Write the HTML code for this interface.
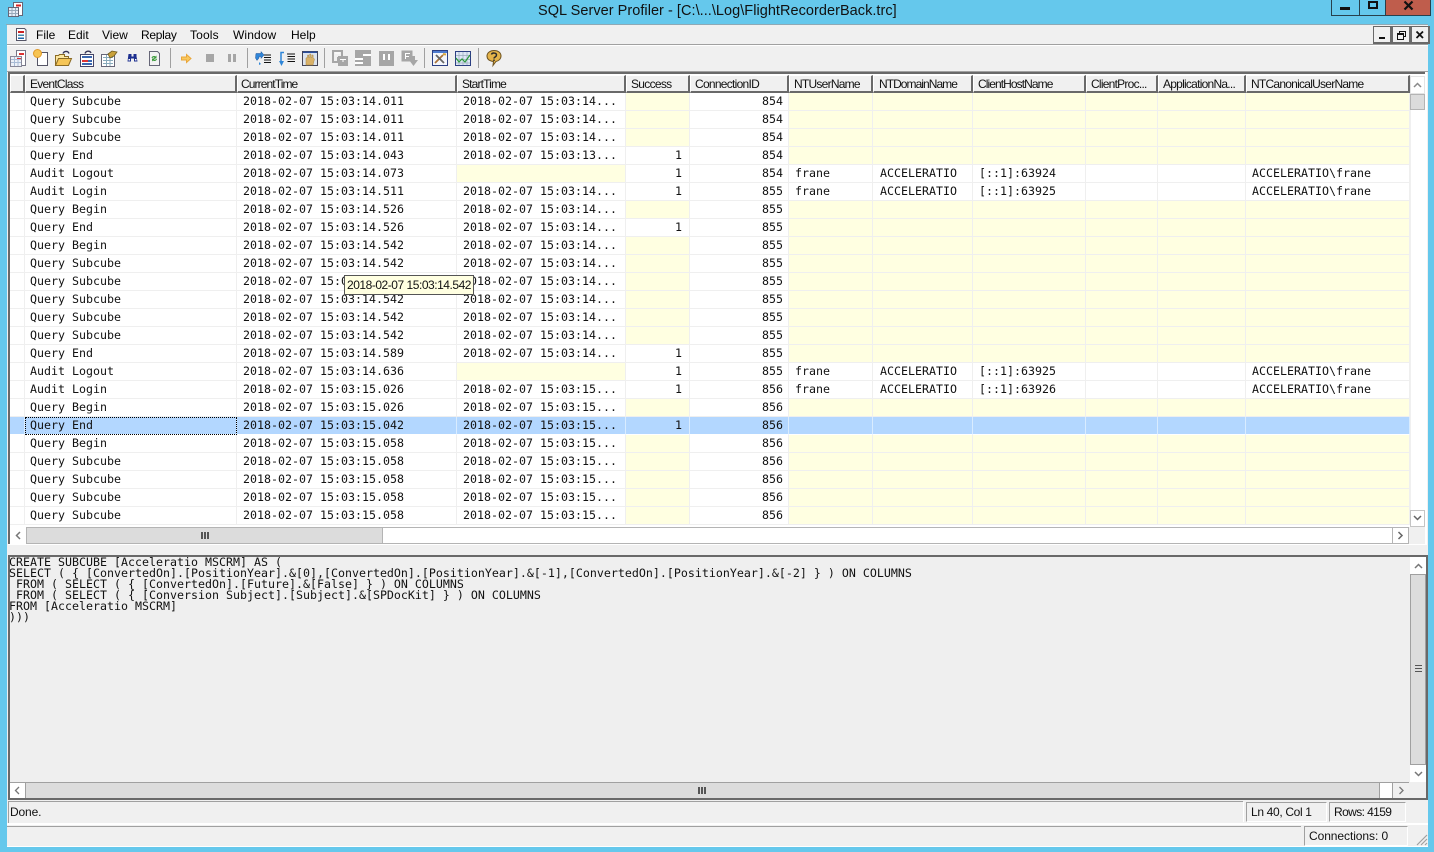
<!DOCTYPE html>
<html><head><meta charset="utf-8"><style>
html,body{margin:0;padding:0;width:1434px;height:852px;overflow:hidden;background:#65c8ec}
*{box-sizing:border-box}
.a{position:absolute}
body{font-family:"Liberation Sans",sans-serif;color:#000}
.m{top:27px;font-size:12px;line-height:16px}
.h{top:75px;height:18px;background:#f0f0f0;border:1px solid #fff;border-right:2px solid #696969;border-bottom:2px solid #696969;font-size:12px;line-height:16px;padding-left:4px;letter-spacing:-.75px;white-space:nowrap;overflow:hidden;color:#111}
table{position:absolute;left:10px;top:93px;width:1400px;table-layout:fixed;border-collapse:separate;border-spacing:0;font:11.63px/17px "DejaVu Sans Mono","Liberation Mono",monospace;color:#111}
td{height:18px;padding:0 0 0 6px;white-space:pre;overflow:hidden;border-right:1px solid #efefef;border-bottom:1px solid #efefef;background:#fff}
td:nth-child(2){padding-left:5px}
td:nth-child(8){padding-left:7px}
td.r{text-align:right;padding:0 5px 0 0}
td:nth-child(5).r{padding-right:7px}
td.y{background:#ffffe1}
tr.s td{background:#b3d7ff;border-right-color:#d9ecff;border-bottom-color:#fff}
#f{left:25px;top:417px;width:212px;height:18px;border:1px dotted #000}
pre{margin:0;position:absolute;left:9px;top:557px;font:11.63px/11px "DejaVu Sans Mono","Liberation Mono",monospace;color:#111}
.g{background:#dcdcdc}
.b{background:#fff;border:1px solid #b4b4b4}
svg{position:absolute;overflow:visible}
.i{top:50px;width:17px;height:17px}
.sp{top:48px;width:1px;height:20px;background:#a0a0a0}
.st{font-size:12px;line-height:14px;color:#111}
</style></head><body>
<div class="a" style="left:7px;top:24px;width:1421px;height:823px;background:#f0f0f0"></div>
<div class="a" style="left:6px;top:24px;width:1422px;height:1px;background:#8fa9b5"></div>
<div class="a" style="left:538px;top:1px;font-size:14.5px;line-height:18px;letter-spacing:.04px;color:#111;white-space:nowrap;margin-top:1px">SQL Server Profiler - [C:\...\Log\FlightRecorderBack.trc]</div>
<svg style="left:8px;top:2px" width="16" height="15" viewBox="0 0 16 15"><path d="M5.500 .5h9v13h-9z" fill="#fff" stroke="#667"/><path d="M8 2.500h5v2H8z" fill="#d22"/><path d="M.5 5.500h10v9H.5z" fill="#e8eef8" stroke="#667"/><path d="M1 8.500h9M1 11.500h9M4 6v8M7.500 6v8" stroke="#9ab"/></svg>
<!-- window controls -->
<div class="a" style="left:1331px;top:0;width:100px;height:16px;background:#65c8ec;border:1px solid #27404c;border-top:0"></div>
<div class="a" style="left:1359px;top:0;width:1px;height:16px;background:#27404c"></div>
<div class="a" style="left:1385px;top:0;width:46px;height:16px;background:#bf5d4c;border:1px solid #27404c;border-top:0"></div>
<div class="a" style="left:1340px;top:7px;width:10px;height:3px;background:#111"></div>
<div class="a" style="left:1368px;top:1px;width:10px;height:8px;border:2px solid #111;border-top-width:2px"></div>
<svg style="left:1403px;top:1px" width="11" height="9"><path d="M1.500 .5L9.500 8.500M9.500 .5L1.500 8.500" stroke="#111" stroke-width="2.200"/></svg>
<!-- MDI controls -->
<div class="a" style="left:1373px;top:26px;width:19px;height:18px;border:1px solid #696969;border-width:1px 2px 2px 1px;background:#f0f0f0"></div>
<div class="a" style="left:1392px;top:26px;width:19px;height:18px;border:1px solid #696969;border-width:1px 2px 2px 1px;background:#f0f0f0"></div>
<div class="a" style="left:1411px;top:26px;width:19px;height:18px;border:1px solid #696969;border-width:1px 2px 2px 1px;background:#f0f0f0"></div>
<div class="a" style="left:1379px;top:37px;width:6px;height:2px;background:#111"></div>
<svg style="left:1397px;top:31px" width="9" height="9"><path d="M2.500 2V.5h6v5H6.500M.5 2.500h6v6h-6zM.5 3.500h6" fill="none" stroke="#111"/></svg>
<svg style="left:1416px;top:31px" width="8" height="8"><path d="M.5 .5L7 7M7 .5L.5 7" stroke="#111" stroke-width="1.800"/></svg>
<!-- menu -->
<svg style="left:16px;top:28px" width="11" height="13"><path d="M.5 .5h8l1.500 1.500v10.500H.5z" fill="#fff" stroke="#556"/><path d="M2 3h6v2H2z" fill="#c22"/><path d="M2 6.500h6v1.500H2z" fill="#48a"/><path d="M2 9.500h6v1.500H2z" fill="#26a"/></svg>
<div class="a m" style="left:36px">File</div>
<div class="a m" style="left:68px">Edit</div>
<div class="a m" style="left:102px">View</div>
<div class="a m" style="left:141px;letter-spacing:-.3px">Replay</div>
<div class="a m" style="left:190px;letter-spacing:.15px">Tools</div>
<div class="a m" style="left:233px;letter-spacing:.1px">Window</div>
<div class="a m" style="left:291px">Help</div>
<div class="a" style="left:7px;top:44px;width:1421px;height:1px;background:#a0a0a0"></div>
<div class="a" style="left:7px;top:45px;width:1421px;height:1px;background:#fff"></div>
<!-- toolbar -->
<svg class="a i" style="left:10px"><path d="M6.500 .5h9v15h-9z" fill="#fff" stroke="#778"/><path d="M9 3h5v2H9z" fill="#d33"/><path d="M.5 6.500h11v10H.5z" fill="#edf1f8" stroke="#889"/><path d="M1 9.500h10M1 12.500h10M4.500 7v9M8 7v9" stroke="#a9bcd6"/><path d="M7 8h4v1H7z" fill="#d33"/></svg>
<svg class="a i" style="left:33px;top:49px"><path d="M4.500 3.500h10v13h-10z" fill="#fff" stroke="#556"/><circle cx="4.500" cy="4.500" r="4" fill="#f6c453" stroke="#e09a2a"/></svg>
<svg class="a i" style="left:55px"><path d="M.5 15.500V5.500h3l1-1h5v2h4v2" fill="#fbe6a0" stroke="#8a6a24"/><path d="M.5 15.500l3-7h13l-3 7z" fill="#f5c557" stroke="#8a6a24"/><path d="M8 3.500C9 1 13 .5 14 3.500" fill="none" stroke="#335" stroke-width="1.300"/></svg>
<svg class="a i" style="left:80px"><path d="M.5 4.500h13v12H.5z" fill="#fff" stroke="#446"/><path d="M2 6h10v2H2z" fill="#3a67b0"/><path d="M2 10h6v2H2z" fill="#d33"/><path d="M8 10h4v2H8zM2 13h10v2H2z" fill="#3a67b0"/><path d="M5 3.500C6 .5 10 .5 11 3" fill="none" stroke="#335" stroke-width="1.300"/></svg>
<svg class="a i" style="left:101px"><path d="M.5 4.500h13v12H.5z" fill="#fff" stroke="#667"/><path d="M2 7.500h10M2 10.500h10M2 13.500h10M5.500 5v11M9 5v11" stroke="#8ab"/><path d="M7 4l4-3 5 1-3 4-4 2z" fill="#c9a13a" stroke="#6d5a1e" stroke-width=".8"/></svg>
<svg class="a i" style="left:127px;top:53px" width="11" height="10"><path d="M1.500 1h3v2.500H4v5H.5zM6.500 1h3v2.500h0L10.500 8.500H7V3.500H6.500z" fill="#1d2f8f"/><path d="M4 3.500h3v2H4z" fill="#1d2f8f"/><path d="M1.500 6h1.500v1.500H1.500zM8 6h1.500v1.500H8z" fill="#fff"/></svg>
<svg class="a i" style="left:148px"><path d="M1.500 1.500h8l2 2v12h-10z" fill="#f2f2f2" stroke="#667"/><path d="M3.500 8a2.500 2.500 0 0 1 4-1.500l1-1v3H5.500l1-1a1.500 1.500 0 0 0-2 .5zM9 9a2.500 2.500 0 0 1-4 1.500l-1 1v-3h3l-1 1a1.500 1.500 0 0 0 2-.5z" fill="#3c9a3c"/></svg>
<div class="a sp" style="left:170px"></div>
<svg class="a i" style="left:181px;top:54px" width="11" height="9"><path d="M.5 3h5V.5L10 4.500 5.500 8.500V6h-5z" fill="#f9c85c" stroke="#e9a63a"/></svg>
<div class="a" style="left:206px;top:54px;width:8px;height:8px;background:#a6a6a6"></div>
<div class="a" style="left:228px;top:54px;width:3px;height:8px;background:#a6a6a6"></div>
<div class="a" style="left:233px;top:54px;width:3px;height:8px;background:#a6a6a6"></div>
<div class="a sp" style="left:247px"></div>
<svg class="a i" style="left:255px"><path d="M8 5h8M9 7.500h7M9 10h7M9 12.500h7" stroke="#111"/><path d="M1 3.500h5V1.500l3 3.500-3 3.500V6.500H4V8L2 10.500 .5 8z" fill="#2f86d8" stroke="#1a4f96" stroke-width=".5"/><path d="M4 12l2 2-2 1z" fill="#2f86d8"/></svg>
<svg class="a i" style="left:279px"><path d="M8 4h8M8.500 6.500h7.500M8.500 9h7.500M8.500 11.500h7.500" stroke="#111"/><path d="M5 2.500H2v9" fill="none" stroke="#2f86d8" stroke-width="1.500"/><path d="M0 11h5l-2.500 5z" fill="#2f86d8"/></svg>
<svg class="a i" style="left:302px"><path d="M.5 1.500h15v14H.5z" fill="#dce3ee" stroke="#445"/><path d="M1 1.500h14v1.500H1z" fill="#2c4f9e"/><path d="M4 15V8l1.500-.5V5h1.200v2.500h1V4h1.200v3.500h1V5h1.200v3l1.400 1-1.500 6z" fill="#d9b168" stroke="#a9894a" stroke-width=".5"/></svg>
<div class="a sp" style="left:324px"></div>
<svg class="a i" style="left:332px"><path d="M1 1h9v7H6v4H1z" fill="none" stroke="#a6a6a6" stroke-width="2"/><path d="M6 6h10v10H6z" fill="#a6a6a6"/><path d="M8 9h6v1H8z" fill="#fff"/><path d="M3 3h5M10 11h2" stroke="#fff"/></svg>
<svg class="a i" style="left:355px"><path d="M0 0h16v16H0z" fill="#a6a6a6"/><path d="M8 4h8v2H8zM0 8h8v2H0zM0 12h8v2H0z" fill="#fff"/></svg>
<svg class="a i" style="left:379px"><path d="M0 1h15v15H0z" fill="#a6a6a6"/><path d="M4 4h2v6H4zM9 4h2v6H9z" fill="#fff"/></svg>
<svg class="a i" style="left:401px"><path d="M.5 .5h11v11H.5z" fill="#a6a6a6"/><path d="M4 3h5v1H4zM4 3h1v6H4zM4 6h4v1H4z" fill="#fff"/><path d="M8 10h3V6h3v4h3l-4.500 6z" fill="#a6a6a6"/></svg>
<div class="a sp" style="left:424px"></div>
<svg class="a i" style="left:432px"><path d="M.5 .5h15v15H.5z" fill="#f4f6fb" stroke="#2c3f82"/><path d="M1 1h14v2H1z" fill="#4f7cd0"/><path d="M3 13l8-8" stroke="#a9743a" stroke-width="1.800"/><path d="M4 5l8 8" stroke="#666" stroke-width="1.800"/><path d="M11 4l3 .5" stroke="#d9a53a" stroke-width="2"/></svg>
<svg class="a i" style="left:455px;top:51px"><path d="M.5 .5h15v14H.5z" fill="#dfe7f6" stroke="#2c3f82"/><path d="M1 4.500h14M1 8.500h14M1 12h14M4 1v13M8 1v13M12 1v13" stroke="#9ab" stroke-width=".7"/><path d="M1 7l3 4 3-3 3 3 5-7" fill="none" stroke="#2a9a3a" stroke-width="1.200"/></svg>
<div class="a sp" style="left:478px"></div>
<svg class="a i" style="left:486px"><path d="M8 .5c4.500 0 7 2.500 7 5.500s-2.500 5-5 5.500l-3 4 .5-4C3.500 11 1 9 1 6s3-5.500 7-5.500z" fill="#e4b34a" stroke="#6e5320"/><path d="M5.500 4.500C6 2.500 10.500 2.500 10.500 5c0 2-2.500 2-2.500 3.500M8 9.500v1.500" fill="none" stroke="#2a2a2a" stroke-width="1.500"/></svg>
<!-- child frame -->
<div class="a" style="left:7px;top:71px;width:1421px;height:1px;background:#a0a0a0"></div>
<div class="a" style="left:8px;top:72px;width:1419px;height:2px;background:#696969"></div>
<div class="a" style="left:8px;top:72px;width:2px;height:472px;background:#696969"></div>
<div class="a" style="left:1425px;top:72px;width:2px;height:472px;background:#fff"></div>
<div class="a" style="left:8px;top:544px;width:1419px;height:1px;background:#fff"></div>
<div class="a" style="left:10px;top:74px;width:1415px;height:454px;background:#fff"></div>
<!-- headers -->
<div class="a h" style="left:10px;width:15px"></div>
<div class="a h" style="left:25px;width:212px">EventClass</div>
<div class="a h" style="left:237px;width:220px;padding-left:3px;letter-spacing:-.9px">CurrentTime</div>
<div class="a h" style="left:457px;width:169px;letter-spacing:-.85px">StartTime</div>
<div class="a h" style="left:626px;width:64px;letter-spacing:-.7px">Success</div>
<div class="a h" style="left:690px;width:99px;letter-spacing:-.72px">ConnectionID</div>
<div class="a h" style="left:789px;width:84px">NTUserName</div>
<div class="a h" style="left:873px;width:100px;padding-left:5px;letter-spacing:-.95px">NTDomainName</div>
<div class="a h" style="left:973px;width:113px;letter-spacing:-.92px">ClientHostName</div>
<div class="a h" style="left:1086px;width:72px">ClientProc...</div>
<div class="a h" style="left:1158px;width:88px">ApplicationNa...</div>
<div class="a h" style="left:1246px;width:164px">NTCanonicalUserName</div>
<table>
<colgroup><col style="width:15px"><col style="width:212px"><col style="width:220px"><col style="width:169px"><col style="width:64px"><col style="width:99px"><col style="width:84px"><col style="width:100px"><col style="width:113px"><col style="width:72px"><col style="width:88px"><col style="width:164px"></colgroup>
<tr><td></td><td>Query Subcube</td><td>2018-02-07 15:03:14.011</td><td>2018-02-07 15:03:14...</td><td class="y"></td><td class="r">854</td><td class="y"></td><td class="y"></td><td class="y"></td><td class="y"></td><td class="y"></td><td class="y"></td></tr>
<tr><td></td><td>Query Subcube</td><td>2018-02-07 15:03:14.011</td><td>2018-02-07 15:03:14...</td><td class="y"></td><td class="r">854</td><td class="y"></td><td class="y"></td><td class="y"></td><td class="y"></td><td class="y"></td><td class="y"></td></tr>
<tr><td></td><td>Query Subcube</td><td>2018-02-07 15:03:14.011</td><td>2018-02-07 15:03:14...</td><td class="y"></td><td class="r">854</td><td class="y"></td><td class="y"></td><td class="y"></td><td class="y"></td><td class="y"></td><td class="y"></td></tr>
<tr><td></td><td>Query End</td><td>2018-02-07 15:03:14.043</td><td>2018-02-07 15:03:13...</td><td class="r">1</td><td class="r">854</td><td class="y"></td><td class="y"></td><td class="y"></td><td class="y"></td><td class="y"></td><td class="y"></td></tr>
<tr><td></td><td>Audit Logout</td><td>2018-02-07 15:03:14.073</td><td class="y"></td><td class="r">1</td><td class="r">854</td><td>frane</td><td>ACCELERATIO</td><td>[::1]:63924</td><td></td><td></td><td>ACCELERATIO\frane</td></tr>
<tr><td></td><td>Audit Login</td><td>2018-02-07 15:03:14.511</td><td>2018-02-07 15:03:14...</td><td class="r">1</td><td class="r">855</td><td>frane</td><td>ACCELERATIO</td><td>[::1]:63925</td><td></td><td></td><td>ACCELERATIO\frane</td></tr>
<tr><td></td><td>Query Begin</td><td>2018-02-07 15:03:14.526</td><td>2018-02-07 15:03:14...</td><td class="y"></td><td class="r">855</td><td class="y"></td><td class="y"></td><td class="y"></td><td class="y"></td><td class="y"></td><td class="y"></td></tr>
<tr><td></td><td>Query End</td><td>2018-02-07 15:03:14.526</td><td>2018-02-07 15:03:14...</td><td class="r">1</td><td class="r">855</td><td class="y"></td><td class="y"></td><td class="y"></td><td class="y"></td><td class="y"></td><td class="y"></td></tr>
<tr><td></td><td>Query Begin</td><td>2018-02-07 15:03:14.542</td><td>2018-02-07 15:03:14...</td><td class="y"></td><td class="r">855</td><td class="y"></td><td class="y"></td><td class="y"></td><td class="y"></td><td class="y"></td><td class="y"></td></tr>
<tr><td></td><td>Query Subcube</td><td>2018-02-07 15:03:14.542</td><td>2018-02-07 15:03:14...</td><td class="y"></td><td class="r">855</td><td class="y"></td><td class="y"></td><td class="y"></td><td class="y"></td><td class="y"></td><td class="y"></td></tr>
<tr><td></td><td>Query Subcube</td><td>2018-02-07 15:03:14.542</td><td>2018-02-07 15:03:14...</td><td class="y"></td><td class="r">855</td><td class="y"></td><td class="y"></td><td class="y"></td><td class="y"></td><td class="y"></td><td class="y"></td></tr>
<tr><td></td><td>Query Subcube</td><td>2018-02-07 15:03:14.542</td><td>2018-02-07 15:03:14...</td><td class="y"></td><td class="r">855</td><td class="y"></td><td class="y"></td><td class="y"></td><td class="y"></td><td class="y"></td><td class="y"></td></tr>
<tr><td></td><td>Query Subcube</td><td>2018-02-07 15:03:14.542</td><td>2018-02-07 15:03:14...</td><td class="y"></td><td class="r">855</td><td class="y"></td><td class="y"></td><td class="y"></td><td class="y"></td><td class="y"></td><td class="y"></td></tr>
<tr><td></td><td>Query Subcube</td><td>2018-02-07 15:03:14.542</td><td>2018-02-07 15:03:14...</td><td class="y"></td><td class="r">855</td><td class="y"></td><td class="y"></td><td class="y"></td><td class="y"></td><td class="y"></td><td class="y"></td></tr>
<tr><td></td><td>Query End</td><td>2018-02-07 15:03:14.589</td><td>2018-02-07 15:03:14...</td><td class="r">1</td><td class="r">855</td><td class="y"></td><td class="y"></td><td class="y"></td><td class="y"></td><td class="y"></td><td class="y"></td></tr>
<tr><td></td><td>Audit Logout</td><td>2018-02-07 15:03:14.636</td><td class="y"></td><td class="r">1</td><td class="r">855</td><td>frane</td><td>ACCELERATIO</td><td>[::1]:63925</td><td></td><td></td><td>ACCELERATIO\frane</td></tr>
<tr><td></td><td>Audit Login</td><td>2018-02-07 15:03:15.026</td><td>2018-02-07 15:03:15...</td><td class="r">1</td><td class="r">856</td><td>frane</td><td>ACCELERATIO</td><td>[::1]:63926</td><td></td><td></td><td>ACCELERATIO\frane</td></tr>
<tr><td></td><td>Query Begin</td><td>2018-02-07 15:03:15.026</td><td>2018-02-07 15:03:15...</td><td class="y"></td><td class="r">856</td><td class="y"></td><td class="y"></td><td class="y"></td><td class="y"></td><td class="y"></td><td class="y"></td></tr>
<tr class="s"><td></td><td>Query End</td><td>2018-02-07 15:03:15.042</td><td>2018-02-07 15:03:15...</td><td class="r">1</td><td class="r">856</td><td></td><td></td><td></td><td></td><td></td><td></td></tr>
<tr><td></td><td>Query Begin</td><td>2018-02-07 15:03:15.058</td><td>2018-02-07 15:03:15...</td><td class="y"></td><td class="r">856</td><td class="y"></td><td class="y"></td><td class="y"></td><td class="y"></td><td class="y"></td><td class="y"></td></tr>
<tr><td></td><td>Query Subcube</td><td>2018-02-07 15:03:15.058</td><td>2018-02-07 15:03:15...</td><td class="y"></td><td class="r">856</td><td class="y"></td><td class="y"></td><td class="y"></td><td class="y"></td><td class="y"></td><td class="y"></td></tr>
<tr><td></td><td>Query Subcube</td><td>2018-02-07 15:03:15.058</td><td>2018-02-07 15:03:15...</td><td class="y"></td><td class="r">856</td><td class="y"></td><td class="y"></td><td class="y"></td><td class="y"></td><td class="y"></td><td class="y"></td></tr>
<tr><td></td><td>Query Subcube</td><td>2018-02-07 15:03:15.058</td><td>2018-02-07 15:03:15...</td><td class="y"></td><td class="r">856</td><td class="y"></td><td class="y"></td><td class="y"></td><td class="y"></td><td class="y"></td><td class="y"></td></tr>
<tr><td></td><td>Query Subcube</td><td>2018-02-07 15:03:15.058</td><td>2018-02-07 15:03:15...</td><td class="y"></td><td class="r">856</td><td class="y"></td><td class="y"></td><td class="y"></td><td class="y"></td><td class="y"></td><td class="y"></td></tr>
</table>
<div class="a" id="f"></div>
<!-- tooltip -->
<div class="a" style="left:344px;top:275px;width:130px;height:20px;background:#ffffe1;border:1px solid #555;font-size:12px;line-height:18px;padding-left:2px;letter-spacing:-.47px;white-space:nowrap;color:#111">2018-02-07 15:03:14.542</div>
<!-- upper v scroll -->
<div class="a" style="left:1410px;top:75px;width:15px;height:453px;background:#fff;border-left:1px solid #f0f0f0"></div>
<div class="a" style="left:1410px;top:76px;width:15px;height:18px;background:#fff;border:1px solid #e4e4e4"></div>
<div class="a" style="left:1410px;top:94px;width:15px;height:16px;background:#dcdcdc;border:1px solid #b4b4b4"></div>
<div class="a" style="left:1410px;top:510px;width:15px;height:17px;background:#fff;border:1px solid #c4c4c4"></div>
<svg style="left:1413px;top:82px" width="9" height="6"><path d="M1 5l3.500-3.500L8 5" fill="none" stroke="#8a8a8a" stroke-width="1.500"/></svg>
<svg style="left:1413px;top:515px" width="9" height="6"><path d="M1 1l3.500 3.500L8 1" fill="none" stroke="#666" stroke-width="1.500"/></svg>
<!-- upper h scroll -->
<div class="a" style="left:10px;top:527px;width:1400px;height:17px;background:#fff;border-top:1px solid #b4b4b4;border-bottom:1px solid #b4b4b4"></div>
<div class="a" style="left:10px;top:527px;width:17px;height:17px;background:#fff;border-right:1px solid #b4b4b4"></div>
<div class="a g" style="left:27px;top:528px;width:356px;height:15px;border-right:1px solid #b4b4b4"></div>
<div class="a" style="left:201px;top:532px;width:8px;height:7px;background:repeating-linear-gradient(90deg,#555 0 2px,transparent 2px 3px)"></div>
<div class="a" style="left:1392px;top:527px;width:17px;height:17px;background:#fff;border:1px solid #b4b4b4"></div>
<svg style="left:15px;top:531px" width="7" height="9"><path d="M5 1L1.500 4.500 5 8" fill="none" stroke="#777" stroke-width="1.500"/></svg>
<svg style="left:1397px;top:531px" width="7" height="9"><path d="M1.500 1L5 4.500 1.500 8" fill="none" stroke="#666" stroke-width="1.500"/></svg>
<div class="a" style="left:1409px;top:527px;width:16px;height:17px;background:#f0f0f0"></div>
<!-- lower pane -->
<div class="a" style="left:8px;top:555px;width:1420px;height:245px;background:#efefef;border:2px solid #696969;border-right-width:2px;border-bottom-width:2px"></div>
<pre>CREATE SUBCUBE [Acceleratio MSCRM] AS (
SELECT ( { [ConvertedOn].[PositionYear].&amp;[0],[ConvertedOn].[PositionYear].&amp;[-1],[ConvertedOn].[PositionYear].&amp;[-2] } ) ON COLUMNS
 FROM ( SELECT ( { [ConvertedOn].[Future].&amp;[False] } ) ON COLUMNS
 FROM ( SELECT ( { [Conversion Subject].[Subject].&amp;[SPDocKit] } ) ON COLUMNS
FROM [Acceleratio MSCRM]
)))</pre>
<div class="a" style="left:1410px;top:557px;width:16px;height:17px;background:#fff"></div>
<div class="a g" style="left:1410px;top:574px;width:16px;height:191px;border:1px solid #a0a0a0;border-width:1px 1px 1px 1px"></div>
<div class="a" style="left:1415px;top:665px;width:7px;height:7px;background:repeating-linear-gradient(180deg,#555 0 1px,transparent 1px 3px)"></div>
<div class="a" style="left:1410px;top:765px;width:16px;height:17px;background:#fff"></div>
<svg style="left:1414px;top:563px" width="9" height="6"><path d="M1 5l3.500-3.500L8 5" fill="none" stroke="#777" stroke-width="1.500"/></svg>
<svg style="left:1414px;top:771px" width="9" height="6"><path d="M1 1l3.500 3.500L8 1" fill="none" stroke="#777" stroke-width="1.500"/></svg>
<div class="a g" style="left:10px;top:782px;width:1399px;height:16px;border-top:1px solid #a0a0a0"></div>
<div class="a" style="left:10px;top:783px;width:16px;height:15px;background:#fff;border-right:1px solid #a0a0a0"></div>
<div class="a" style="left:1379px;top:783px;width:14px;height:15px;background:#fff;border-left:1px solid #a0a0a0;border-right:1px solid #a0a0a0"></div>
<div class="a" style="left:1393px;top:783px;width:16px;height:15px;background:#f0f0f0"></div>
<div class="a" style="left:698px;top:787px;width:8px;height:7px;background:repeating-linear-gradient(90deg,#555 0 2px,transparent 2px 3px)"></div>
<svg style="left:14px;top:786px" width="7" height="9"><path d="M5 1L1.500 4.500 5 8" fill="none" stroke="#777" stroke-width="1.300"/></svg>
<svg style="left:1398px;top:786px" width="7" height="9"><path d="M1.500 1L5 4.500 1.500 8" fill="none" stroke="#777" stroke-width="1.300"/></svg>
<!-- status 1 -->
<div class="a" style="left:8px;top:801px;width:1235px;height:1px;background:#a0a0a0"></div>
<div class="a" style="left:8px;top:801px;width:1px;height:22px;background:#a0a0a0"></div>
<div class="a" style="left:1243px;top:802px;width:1px;height:20px;background:#fff"></div>
<div class="a" style="left:1246px;top:802px;width:81px;height:20px;border:1px solid #a0a0a0;border-right-color:#fff;border-bottom-color:#fff"></div>
<div class="a" style="left:1329px;top:802px;width:77px;height:20px;border:1px solid #a0a0a0;border-right-color:#fff;border-bottom-color:#fff"></div>
<div class="a st" style="left:10px;top:805px;letter-spacing:-.15px">Done.</div>
<div class="a st" style="left:1251px;top:805px;letter-spacing:-.34px">Ln 40, Col 1</div>
<div class="a st" style="left:1334px;top:805px;letter-spacing:-.6px">Rows: 4159</div>
<div class="a" style="left:7px;top:823px;width:1421px;height:2px;background:#fff"></div>
<div class="a" style="left:7px;top:826px;width:1294px;height:1px;background:#a0a0a0"></div>
<div class="a" style="left:1304px;top:826px;width:104px;height:20px;border:1px solid #a0a0a0;border-right-color:#fff;border-bottom-color:#fff"></div>
<div class="a st" style="left:1309px;top:829px;letter-spacing:-.07px">Connections: 0</div>
<div class="a" style="left:7px;top:846px;width:1421px;height:1px;background:#fff"></div>
<svg style="left:1416px;top:834px" width="12" height="12"><path d="M1 11L11 1M5 11L11 5M9 11L11 9" stroke="#a0a0a0" stroke-width="1.200"/></svg>
</body></html>
